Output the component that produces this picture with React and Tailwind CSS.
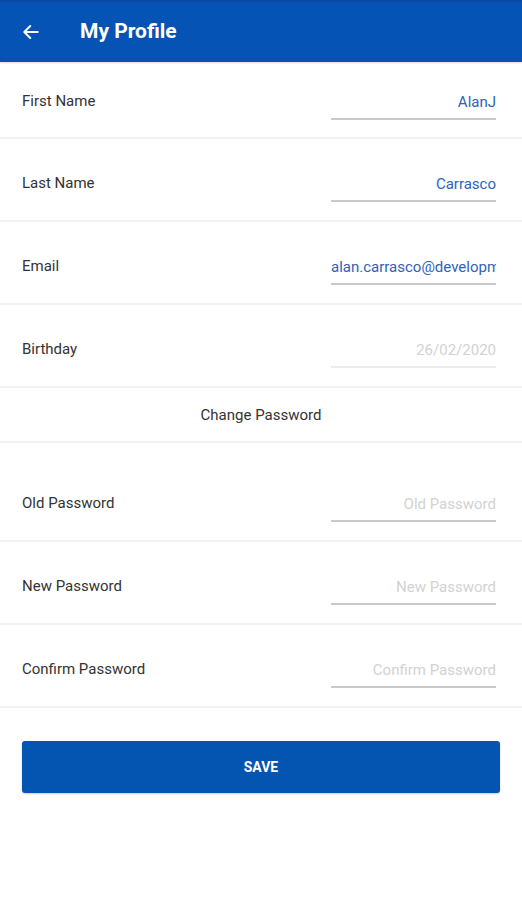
import React from "react";

const font = { fontFamily: "Roboto, 'Noto Sans', sans-serif" };

function Row({ label, value, kind, first }) {
  const color =
    kind === "value" ? "text-[#2f62b8]" : "text-[#d2d2d2]";
  const line = kind === "faint" ? "bg-[#ececec]" : "bg-[#c9c9c9]";
  return (
    <div
      className={`flex items-start justify-between border-b-2 border-[#f2f2f2] pl-[22px] pr-[26px] ${
        first ? "h-[77px] pt-[29px]" : "h-[83px] pt-[34px]"
      }`}
    >
      <div className="text-[15px] leading-[20px] text-[#333]">{label}</div>
      <div className="mt-[1px] w-[165px]">
        <div
          className={`overflow-hidden whitespace-nowrap text-right text-[15px] leading-[20px] ${color}`}
        >
          {value}
        </div>
        <div className={`mt-[6px] h-[2px] w-full ${line}`} />
      </div>
    </div>
  );
}

export default function App() {
  return (
    <div className="h-[900px] w-[522px] bg-white" style={font}>
      <div className="relative z-10 flex h-[62px] items-center border-t-2 border-[#0a4aa3] bg-[#0553b5] shadow-[0_1px_2px_rgba(0,0,0,0.15)]">
        <svg
          className="ml-[22px]"
          width="18"
          height="18"
          viewBox="0 0 24 24"
          fill="none"
          stroke="white"
          strokeWidth="2.6"
          strokeLinecap="round"
          strokeLinejoin="round"
        >
          <path d="M21 12H3.5M11 4l-8 8 8 8" />
        </svg>
        <div className="ml-[40px] text-[21px] font-bold text-white">My Profile</div>
      </div>
      <Row first label="First Name" value="AlanJ" kind="value" />
      <Row label="Last Name" value="Carrasco" kind="value" />
      <Row label="Email" value="alan.carrasco@development.com" kind="value" />
      <Row label="Birthday" value="26/02/2020" kind="faint" />
      <div className="flex h-[55px] items-center justify-center border-b-2 border-[#f2f2f2] pt-[1px] text-[15px] text-[#333]">
        Change Password
      </div>
      <div className="h-[16px]" />
      <Row label="Old Password" value="Old Password" kind="placeholder" />
      <Row label="New Password" value="New Password" kind="placeholder" />
      <Row label="Confirm Password" value="Confirm Password" kind="placeholder" />
      <div className="px-[22px] pt-[33px]">
        <button className="flex h-[52px] w-[478px] items-center justify-center rounded-[3px] bg-[#0454b2] text-[14px] font-bold text-white shadow-[0_1px_2px_rgba(0,0,0,0.2)]">
          SAVE
        </button>
      </div>
    </div>
  );
}
